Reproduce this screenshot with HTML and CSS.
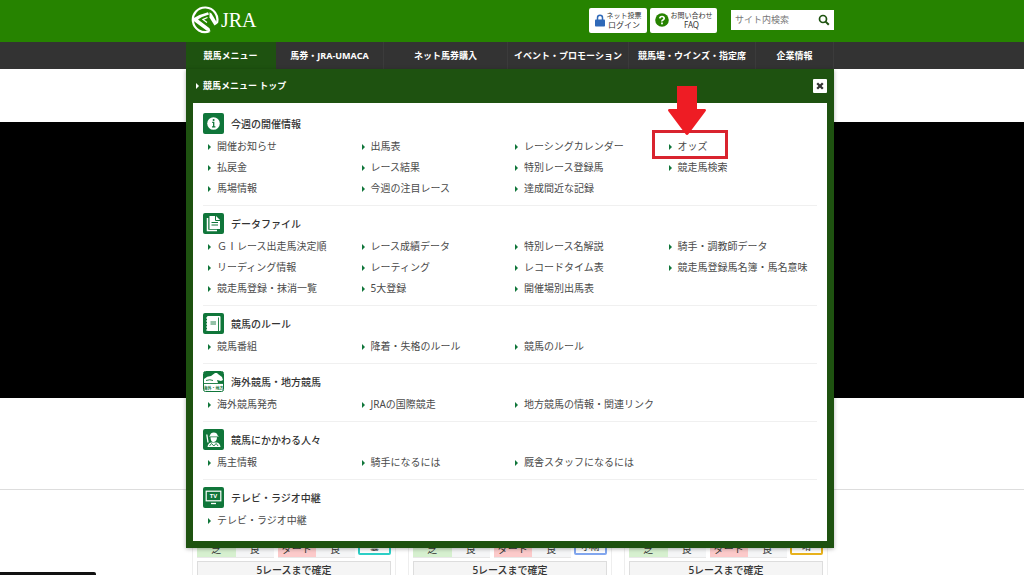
FILE: index.html
```html
<!DOCTYPE html>
<html lang="ja">
<head>
<meta charset="utf-8">
<title>JRA</title>
<link rel="stylesheet" href="styles.css">
</head>
<body>
<div class="page">
  <header class="header">
    <div class="wrap header-row">
      <a class="logo" href="#">
        <svg class="logo-mark" viewBox="0 0 30 28" aria-hidden="true">
          <path d="M19.500 25.300A12.300 12.300 0 1 1 27 17" fill="none" stroke="#fff" stroke-width="2.200"/>
          <path d="M3 12.500Q10 8 18 6.200L19 8.400Q13 10 8 13.400L19.500 22.300L20.500 25.500L16.500 24.500L3 14.500Z" fill="#fff"/>
          <path d="M17.500 11.500L13 13.500L17 16.500" fill="none" stroke="#fff" stroke-width="1.300"/>
          <path d="M19.500 6.200L21.500 7.500L27.500 17.500L24.500 19.500L19.500 11.500Z" fill="#fff"/>
        </svg>
        <span class="logo-text">JRA</span>
      </a>
      <div class="tools">
        <a class="tool" href="#">
          <svg class="tool-lock" viewBox="0 0 10 13" aria-hidden="true"><path d="M2.500 6V3.800a2.500 2.500 0 0 1 5 0V6" fill="none" stroke="#2f69b8" stroke-width="1.500"/><rect y="5.500" width="10" height="7" rx=".8" fill="#2f69b8"/></svg>
          <span class="tool-label"><small>ネット投票</small><span>ログイン</span></span>
        </a>
        <a class="tool tool-faq" href="#">
          <svg class="tool-help" viewBox="0 0 14 14" aria-hidden="true"><circle cx="7" cy="7" r="6.800" fill="#268300"/><path d="M4.800 5.300Q5 3.500 7 3.500T9.200 5.300Q9.200 6.300 8 6.900T7 8.500" fill="none" stroke="#fff" stroke-width="1.700"/><rect x="6.100" y="9.500" width="1.800" height="1.800" fill="#fff"/></svg>
          <span class="tool-label"><small>お問い合わせ</small><span>FAQ</span></span>
        </a>
        <form class="search">
          <input class="search-input" type="text" placeholder="サイト内検索" aria-label="サイト内検索">
          <button class="search-button" type="button" aria-label="検索"><svg viewBox="0 0 12 12" aria-hidden="true"><circle cx="5" cy="5" r="3.500" fill="none" stroke="#1e5210" stroke-width="1.700"/><path d="M7.600 7.600L10.800 10.800" stroke="#1e5210" stroke-width="2"/></svg></button>
        </form>
      </div>
    </div>
  </header>

  <div class="navbar">
    <div class="wrap nav-wrap">
      <nav class="nav">
        <a class="tab tab-active" href="#">競馬メニュー</a>
        <a class="tab" href="#">馬券・JRA-UMACA</a>
        <a class="tab" href="#">ネット馬券購入</a>
        <a class="tab" href="#">イベント・プロモーション</a>
        <a class="tab" href="#">競馬場・ウインズ・指定席</a>
        <a class="tab" href="#">企業情報</a>
      </nav>
      <div class="menu">
        <div class="menu-head">
          <a class="menu-title" href="#">競馬メニュー トップ</a>
          <button class="close" type="button" aria-label="閉じる"><svg viewBox="0 0 8 8" aria-hidden="true"><path d="M1.200 1.200L6.800 6.800M6.800 1.200L1.200 6.800" stroke="#333" stroke-width="2.300"/></svg></button>
        </div>
        <div class="menu-body">
          <section class="group">
            <h2 class="group-title"><svg class="icon" viewBox="0 0 21 21" aria-hidden="true"><rect width="21" height="21" rx="2" fill="#10763a"/><circle cx="10.500" cy="10.500" r="6.300" fill="#fff"/><path d="M9.200 9.300h1.500v4M9 13.800h3.400" fill="none" stroke="#10763a" stroke-width="1.300"/><circle cx="10.600" cy="6.900" r="1" fill="#10763a"/></svg>今週の開催情報</h2>
            <ul class="links">
              <li><a href="#">開催お知らせ</a></li><li><a href="#">出馬表</a></li><li><a href="#">レーシングカレンダー</a></li><li><a href="#">オッズ</a></li>
              <li><a href="#">払戻金</a></li><li><a href="#">レース結果</a></li><li><a href="#">特別レース登録馬</a></li><li><a href="#">競走馬検索</a></li>
              <li><a href="#">馬場情報</a></li><li><a href="#">今週の注目レース</a></li><li><a href="#">達成間近な記録</a></li>
            </ul>
          </section>
          <section class="group">
            <h2 class="group-title"><svg class="icon" viewBox="0 0 21 21" aria-hidden="true"><rect width="21" height="21" rx="2" fill="#10763a"/><path d="M4.500 5v12.500H14" fill="none" stroke="#fff" stroke-width="1.500"/><path d="M6.500 3H13l4 4v9H6.500z" fill="#fff"/><path d="M12.500 3v4.500H17M8.500 9.500h6.500M8.500 12h6.500" fill="none" stroke="#10763a"/></svg>データファイル</h2>
            <ul class="links">
              <li><a href="#">ＧⅠレース出走馬決定順</a></li><li><a href="#">レース成績データ</a></li><li><a href="#">特別レース名解説</a></li><li><a href="#">騎手・調教師データ</a></li>
              <li><a href="#">リーディング情報</a></li><li><a href="#">レーティング</a></li><li><a href="#">レコードタイム表</a></li><li><a href="#">競走馬登録馬名簿・馬名意味</a></li>
              <li><a href="#">競走馬登録・抹消一覧</a></li><li><a href="#">5大登録</a></li><li><a href="#">開催場別出馬表</a></li>
            </ul>
          </section>
          <section class="group">
            <h2 class="group-title"><svg class="icon" viewBox="0 0 21 21" aria-hidden="true"><rect width="21" height="21" rx="2" fill="#10763a"/><rect x="4" y="3" width="13.500" height="15" rx="1" fill="#fff"/><path d="M15.500 4.500v13.500M7.500 9h5.500M7.500 11h5.500" stroke="#10763a" stroke-width=".9"/><path d="M3 5h2M3 8h2M3 11h2M3 14h2M3 17h2" stroke="#fff"/></svg>競馬のルール</h2>
            <ul class="links"><li><a href="#">競馬番組</a></li><li><a href="#">降着・失格のルール</a></li><li><a href="#">競馬のルール</a></li></ul>
          </section>
          <section class="group">
            <h2 class="group-title"><svg class="icon" viewBox="0 0 21 21" aria-hidden="true"><rect x=".5" y=".5" width="20" height="20" rx="2" fill="#fff" stroke="#10763a"/><path d="M1 1h19v11H1z" fill="#10763a"/><path d="M1 12V8Q4 5 8 5l4-3h2l1 1 4 3 1 3-2 1-4-1 1 3z" fill="#fff"/><path d="M3 9.500Q7 8 10 9.500M1 12.500h19" fill="none" stroke="#10763a" stroke-width=".9"/><text x="10.500" y="18.500" text-anchor="middle" class="icon-small">海外・地方</text></svg>海外競馬・地方競馬</h2>
            <ul class="links"><li><a href="#">海外競馬発売</a></li><li><a href="#">JRAの国際競走</a></li><li><a href="#">地方競馬の情報・関連リンク</a></li></ul>
          </section>
          <section class="group">
            <h2 class="group-title"><svg class="icon" viewBox="0 0 21 21" aria-hidden="true"><rect width="21" height="21" rx="2" fill="#10763a"/><path d="M7 6.500Q7.500 3.500 10.800 3.500T14.600 6.500L16 7.500H6zM7.500 8.300h6.500Q14 12.500 10.800 13T7.500 8.300M4.500 18Q5 14 8 13.500h6q3 .5 3.500 4.500z" fill="#fff"/><path d="M3.800 5.500l1.200 8" fill="none" stroke="#fff" stroke-width="1.300"/><path d="M6.500 17l2-2.500 2.300 2.500 2.300-2.500 2 2.500" fill="none" stroke="#10763a" stroke-width=".9"/></svg>競馬にかかわる人々</h2>
            <ul class="links"><li><a href="#">馬主情報</a></li><li><a href="#">騎手になるには</a></li><li><a href="#">厩舎スタッフになるには</a></li></ul>
          </section>
          <section class="group">
            <h2 class="group-title"><svg class="icon" viewBox="0 0 21 21" aria-hidden="true"><rect width="21" height="21" rx="2" fill="#10763a"/><rect x="3.200" y="4.200" width="14.600" height="9.600" fill="none" stroke="#fff" stroke-width="1.200"/><path d="M8 16.500h5" stroke="#fff" stroke-width="1.300"/><text x="10.500" y="11.200" text-anchor="middle" class="icon-tv">TV</text></svg>テレビ・ラジオ中継</h2>
            <ul class="links"><li><a href="#">テレビ・ラジオ中継</a></li></ul>
          </section>
        </div>
        <div class="highlight"></div>
        <svg class="pointer" viewBox="0 0 38 50" aria-hidden="true"><path d="M9 0h20v23h8q2 1 0 3L20.500 48q-1.500 2-3 0L1 26q-2-2 0-3h8z" fill="#ee1c24"/></svg>
      </div>
    </div>
  </div>

  <main class="main">
    <div class="hero"></div>
    <div class="results">
      <div class="wrap cards">
        <article class="card">
          <div class="track"><span class="pair"><span class="turf">芝</span><span class="state">良</span></span><span class="pair"><span class="dirt">ダート</span><span class="state">良</span></span><span class="weather cyan">曇</span></div>
          <p class="status">5レースまで確定</p>
        </article>
        <article class="card">
          <div class="track"><span class="pair"><span class="turf">芝</span><span class="state">良</span></span><span class="pair"><span class="dirt">ダート</span><span class="state">良</span></span><span class="weather blue">小雨</span></div>
          <p class="status">5レースまで確定</p>
        </article>
        <article class="card">
          <div class="track"><span class="pair"><span class="turf">芝</span><span class="state">良</span></span><span class="pair"><span class="dirt">ダート</span><span class="state">良</span></span><span class="weather gold">晴</span></div>
          <p class="status">5レースまで確定</p>
        </article>
      </div>
    </div>
  </main>
  <div class="statusbar"></div>
</div>
</body>
</html>
```
FILE: styles.css
```css
* { box-sizing: border-box; }
body {
  margin: 0;
  background: #fff;
  color: #4a4a4a;
  font: 10px/20px "Noto Sans", "Noto Sans CJK JP", sans-serif;
}
a { color: inherit; text-decoration: none; }
h2, p, ul { margin: 0; padding: 0; }
ul { list-style: none; }
svg { display: block; flex: none; }
.page { position: relative; height: 100vh; overflow: hidden; }
.wrap { max-width: 648px; margin: 0 auto; }
.header, .navbar, .results { padding-right: 4px; }

.header { background: #268300; }
.header-row { display: flex; align-items: center; justify-content: space-between; height: 42px; padding: 0 0 2px 4px; }
.logo { display: flex; align-items: center; gap: 1px; color: #fff; }
.logo-mark { width: 30px; height: 28px; }
.logo-text { font: 20px/20px "Liberation Serif", serif; }
.tools { display: flex; align-items: center; gap: 3px; }
.tool {
  display: flex; align-items: center; justify-content: center; gap: 2px;
  width: 58px; height: 25px; border-radius: 2px;
  background: #fff; color: #333;
}
.tool-faq { width: 67px; }
.tool-label { display: flex; flex-direction: column; align-items: center; font-size: 8px; line-height: 9px; white-space: nowrap; }
.tool-label small { font-size: 7px; line-height: 8px; }
.tool-lock { width: 10px; height: 13px; }
.tool-help { width: 14px; height: 14px; }
.search { display: flex; align-items: center; width: 103px; height: 20px; margin-left: 11px; background: #fff; }
.search-input { flex: 1; min-width: 0; height: 20px; padding: 0 4px; border: 0; background: none; font: 9px/20px "Noto Sans CJK JP", sans-serif; }
.search-input::placeholder { color: #777; }
.search-button { width: 16px; padding: 0 4px 0 0; border: 0; background: none; }
.search-button svg { width: 12px; height: 12px; }

.navbar { background: #333; }
.nav-wrap { position: relative; }
.nav { display: grid; grid-template-columns: 90fr 108fr 124fr 121fr 127fr 78fr; height: 27px; }
.tab {
  display: flex; align-items: center; justify-content: center;
  border-right: 1px solid #3b3b3b;
  color: #fff; font-size: 9px; font-weight: 700; white-space: nowrap;
}
.tab-active { background: #1e5210; border-color: #1e5210; }

.menu {
  position: absolute; z-index: 2; top: 27px; left: 0; right: 0;
  padding: 0 7px 7px; background: #1e5210;
  box-shadow: 0 1px 4px rgba(0, 0, 0, .3);
}
.menu-head { display: flex; align-items: center; justify-content: space-between; height: 34px; padding-left: 3px; color: #fff; }
.menu-title { display: flex; align-items: center; gap: 4px; font-size: 9px; font-weight: 700; }
.menu-title::before, .links a::before { content: ""; border: solid transparent; border-width: 3px 0 3px 3px; border-left-color: #fff; }
.close { display: grid; place-items: center; width: 14px; height: 14px; padding: 0; border: 0; border-radius: 1px; background: #fff; }
.close svg { width: 8px; height: 8px; }
.menu-body { padding: 3px 10px 4px; background: #fff; }
.group { padding: 7px 0 6px; border-bottom: 1px solid #f0f0f0; }
.group:last-child { border: 0; }
.group-title { display: flex; align-items: center; gap: 7px; margin-bottom: 2px; color: #333; font-size: 10px; font-weight: 500; font-family: "Noto Sans CJK JP", sans-serif; line-height: 20px; }
.icon { width: 21px; height: 21px; }
.icon-small { fill: #10763a; font: 700 4px "Noto Sans CJK JP", sans-serif; }
.icon-tv { fill: #fff; font: 700 6px "Noto Sans", sans-serif; }
.links { display: grid; grid-template-columns: repeat(4, 1fr); }
.links a { display: flex; align-items: center; gap: 6px; padding-left: 5px; line-height: 21px; white-space: nowrap; }
.links a::before { border-left-color: #10763a; }

.highlight { position: absolute; top: 61px; left: 466px; width: 76px; height: 29px; border: 3px solid #d9232e; }
.pointer { position: absolute; top: 17px; left: 482px; width: 38px; height: 50px; }

.main { padding-top: 53px; }
.hero { height: 276px; background: #000; }
.results { margin-top: 91px; padding-top: 30px; border-top: 1px solid #ddd; }
.cards { display: grid; grid-template-columns: repeat(3, 1fr); gap: 12px; padding: 0 6px; }
.card { padding: 17px 4px 0; border: 1px solid #eee; border-bottom: 0; }
.track { display: flex; align-items: flex-start; justify-content: space-between; color: #333; text-align: center; }
.pair { display: flex; width: 77px; border-bottom: 1px solid #e8e8e8; }
.turf, .dirt, .state { flex: 1; padding-top: 4px; line-height: 15px; }
.turf { background: #d6f0cf; }
.state { background: #f5f6f7; }
.dirt { background: #fccaca; }
.weather { width: 33px; height: 17px; border: 2px solid; border-radius: 2px; line-height: 13px; font-size: 9px; }
.cyan { border-color: #2ccfc6; }
.blue { border-color: #82a7ef; }
.gold { border-color: #e8b21d; }
.status { margin-top: 3px; border: 1px solid #ddd; border-bottom: 0; background: #f5f5f5; color: #333; font-weight: 500; text-align: center; line-height: 16px; }
.statusbar { position: absolute; left: 0; bottom: 0; width: 96px; height: 3px; border-radius: 0 2px 0 0; background: #111; }
```
